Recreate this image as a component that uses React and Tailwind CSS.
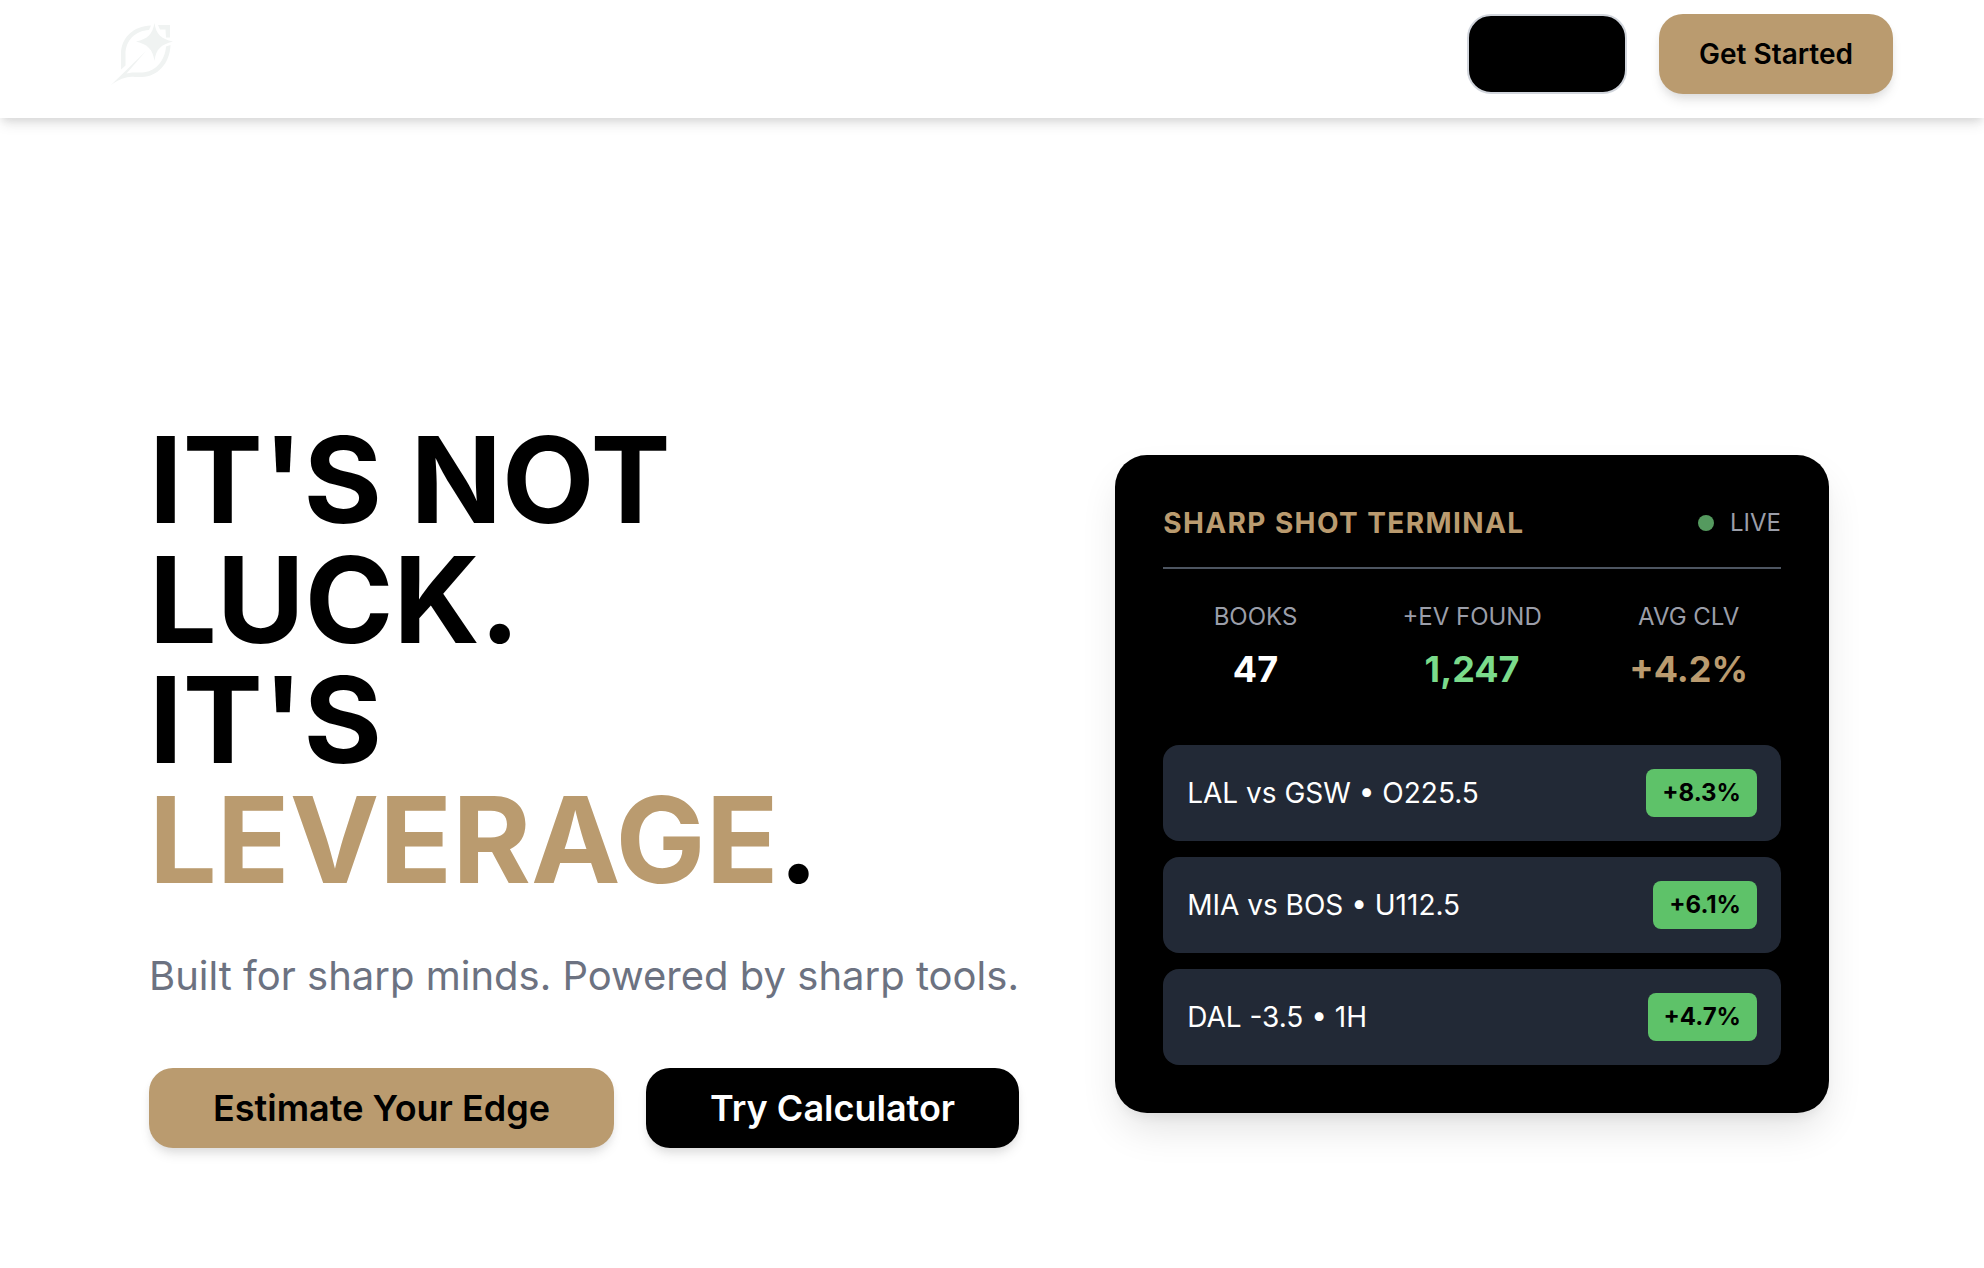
const stats = [
  { label: "BOOKS", value: "47", color: "text-white" },
  { label: "+EV FOUND", value: "1,247", color: "text-[#7bdb8b]" },
  { label: "AVG CLV", value: "+4.2%", color: "text-[#ba9b6f]" },
];

const picks = [
  { name: "LAL vs GSW • O225.5", edge: "+8.3%" },
  { name: "MIA vs BOS • U112.5", edge: "+6.1%" },
  { name: "DAL -3.5 • 1H", edge: "+4.7%" },
];

function Logo() {
  return (
    <svg viewBox="0 0 68 68" className="size-[68px]" aria-hidden="true">
      <g fill="#f0f3f2">
        <path d="M46.500 3C48 14 53 19 65 21.500C53 24.500 48 29 46.500 41C44.500 29 40 24.500 28 21.500C40 19 44.500 14 46.500 3Z" />
        <path d="M50 5H62V17.500H58L57.500 9.500H52Z" />
        <path d="M43 5.500C25 6 13 18 13 34V49.500L17.500 45.500V34C17.500 21 27 10.500 41 10Z" />
        <path d="M38 31L2.500 65.500C12 58.500 20 56 27 57H34C50 56.500 62 43 62.500 25L58 26.500C57 41 47 52 34 52.500H24L18.500 53.500Z" />
      </g>
    </svg>
  );
}

export default function App() {
  return (
    <div className="min-h-screen bg-white font-['Inter',sans-serif] text-black">
      <header className="flex items-center justify-between bg-white pt-3.5 pr-[91px] pb-6 pl-[108px] shadow-[0_8px_12px_-2px_rgba(0,0,0,0.1),0_4px_8px_-2px_rgba(0,0,0,0.08)]">
        <a href="#home" aria-label="Sharp Shot home">
          <Logo />
        </a>
        <nav className="flex items-center gap-8">
          <button aria-label="Log in" className="h-20 w-40 rounded-3xl border-2 border-gray-300 bg-black" />
          <button className="h-20 rounded-3xl bg-[#ba9b6f] px-10 text-[28px] font-semibold shadow-[0_8px_12px_-2px_rgba(0,0,0,0.1),0_4px_8px_-2px_rgba(0,0,0,0.06)]">
            Get Started
          </button>
        </nav>
      </header>

      <main className="flex items-center gap-24 pt-[302px] pr-[155px] pb-24 pl-[149px]">
        <section className="shrink-0">
          <h1 className="text-[120px] leading-[120px] font-bold">
            IT'S NOT
            <br />
            LUCK.
            <br />
            IT'S
            <br />
            <span className="text-[#ba9b6f]">LEVERAGE</span>.
          </h1>
          <p className="mt-12 text-[40px] leading-[56px] text-[#6c7281]">
            Built for sharp minds. Powered by sharp tools.
          </p>
          <div className="mt-16 flex gap-8">
            <button className="h-20 rounded-3xl bg-[#ba9b6f] px-16 text-4xl font-semibold shadow-[0_8px_12px_-2px_rgba(0,0,0,0.1),0_4px_8px_-2px_rgba(0,0,0,0.06)]">
              Estimate Your Edge
            </button>
            <button className="h-20 rounded-3xl bg-black px-16 text-4xl font-semibold text-white shadow-[0_8px_12px_-2px_rgba(0,0,0,0.1),0_4px_8px_-2px_rgba(0,0,0,0.06)]">
              Try Calculator
            </button>
          </div>
        </section>

        <section className="flex-1 rounded-[32px] bg-black p-12 shadow-[0_20px_40px_-6px_rgba(0,0,0,0.12),0_8px_12px_-4px_rgba(0,0,0,0.06)]">
          <div className="flex items-center justify-between border-b-2 border-[#4d5561] pb-6">
            <h2 className="text-[28px] leading-10 font-bold tracking-wider text-[#ba9b6f]">SHARP SHOT TERMINAL</h2>
            <div className="flex items-center gap-4 text-2xl text-[#9b9ea9]">
              <span className="size-4 rounded-full bg-[#559a5f]" />
              LIVE
            </div>
          </div>
          <dl className="mt-8 grid grid-cols-3 gap-8 text-center">
            {stats.map((s) => (
              <div key={s.label}>
                <dt className="text-2xl text-[#9b9ea9]">{s.label}</dt>
                <dd className={`mt-2 text-4xl leading-[56px] font-bold ${s.color}`}>{s.value}</dd>
              </div>
            ))}
          </dl>
          <ul className="mt-12 flex flex-col gap-4">
            {picks.map((p) => (
              <li key={p.name} className="flex items-center justify-between rounded-2xl bg-[#222936] p-6">
                <span className="text-[28px] leading-10 text-white">{p.name}</span>
                <span className="rounded-lg bg-[#5ec269] px-4 py-2 text-2xl font-bold">{p.edge}</span>
              </li>
            ))}
          </ul>
        </section>
      </main>
    </div>
  );
}
